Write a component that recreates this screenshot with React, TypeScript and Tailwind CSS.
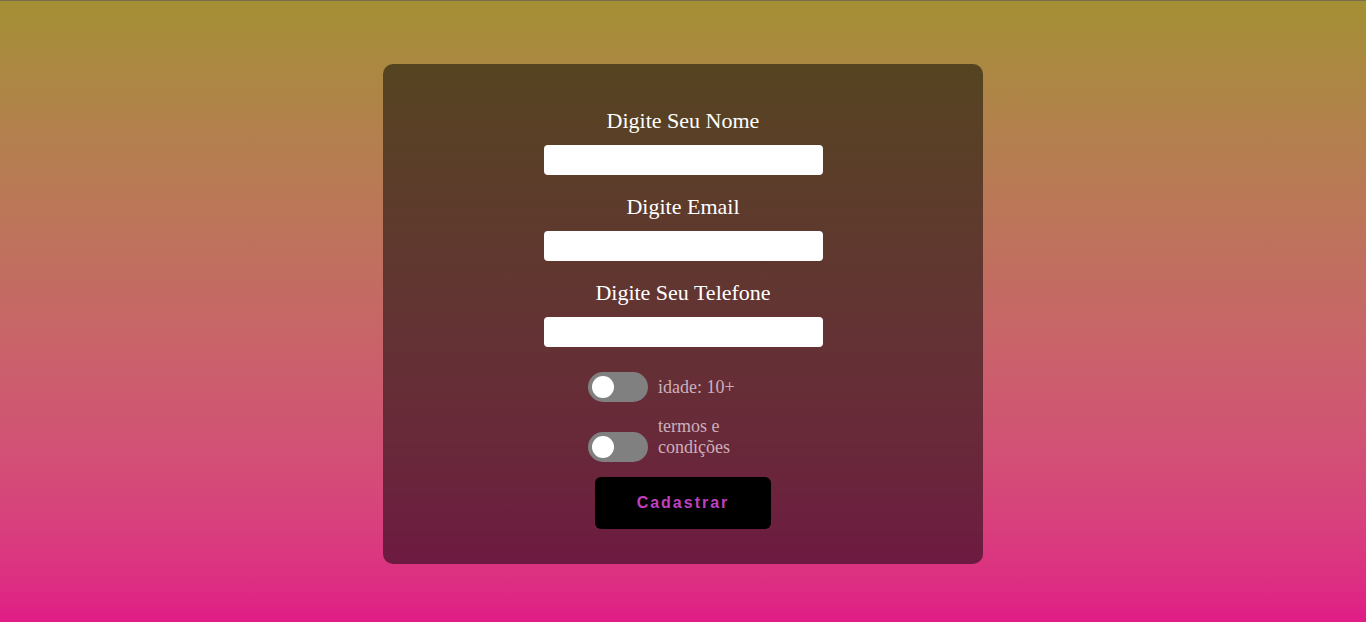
import React, { useState } from "react";

const Toggle = ({ label }: { label: string }) => {
  const [on, setOn] = useState<boolean>(false);
  return (
    <div className="flex items-end w-[190px]">
      <button
        type="button"
        onClick={() => setOn((pre) => !pre)}
        className={`relative shrink-0 w-[60px] h-[30px] rounded-full ${
          on ? "bg-[#c040c0]" : "bg-[#808080]"
        }`}
      >
        <span
          className={`absolute top-[4px] w-[22px] h-[22px] rounded-full bg-white ${
            on ? "left-[34px]" : "left-[4px]"
          }`}
        />
      </button>
      <span className="pl-[10px] pb-[4px] w-[120px] text-[18px] leading-[21px] text-[#cbb0bc]">
        {label}
      </span>
    </div>
  );
};

const Field = ({ label }: { label: string }) => (
  <div className="flex flex-col items-center">
    <label className="text-[22px] leading-[24px] text-white">{label}</label>
    <input
      type="text"
      className="mt-[12px] w-[279px] h-[30px] rounded-[4px] bg-white outline-none px-2 text-black"
    />
  </div>
);

export default function App() {
  return (
    <div
      className="min-h-screen h-[622px] border-t border-[#7a6d4c] bg-gradient-to-b from-[#a38f33] to-[#e01b86] flex justify-center"
      style={{ fontFamily: '"Liberation Serif", "Times New Roman", serif' }}
    >
      <form className="mt-[63px] w-[600px] h-[500px] rounded-[10px] bg-black/50 flex flex-col items-center pt-[45px]">
        <div className="flex flex-col gap-[20px]">
          <Field label="Digite Seu Nome" />
          <Field label="Digite Email" />
          <Field label="Digite Seu Telefone" />
        </div>
        <div className="mt-[25px] flex flex-col gap-[14px] items-center">
          <Toggle label="idade: 10+" />
          <Toggle label="termos e condições" />
        </div>
        <button
          type="button"
          className="mt-[15px] w-[176px] h-[52px] rounded-[6px] bg-black text-[#c040c0] text-[16px] font-bold tracking-[2px]"
          style={{ fontFamily: '"Liberation Sans", Arial, sans-serif' }}
        >
          Cadastrar
        </button>
      </form>
    </div>
  );
}
